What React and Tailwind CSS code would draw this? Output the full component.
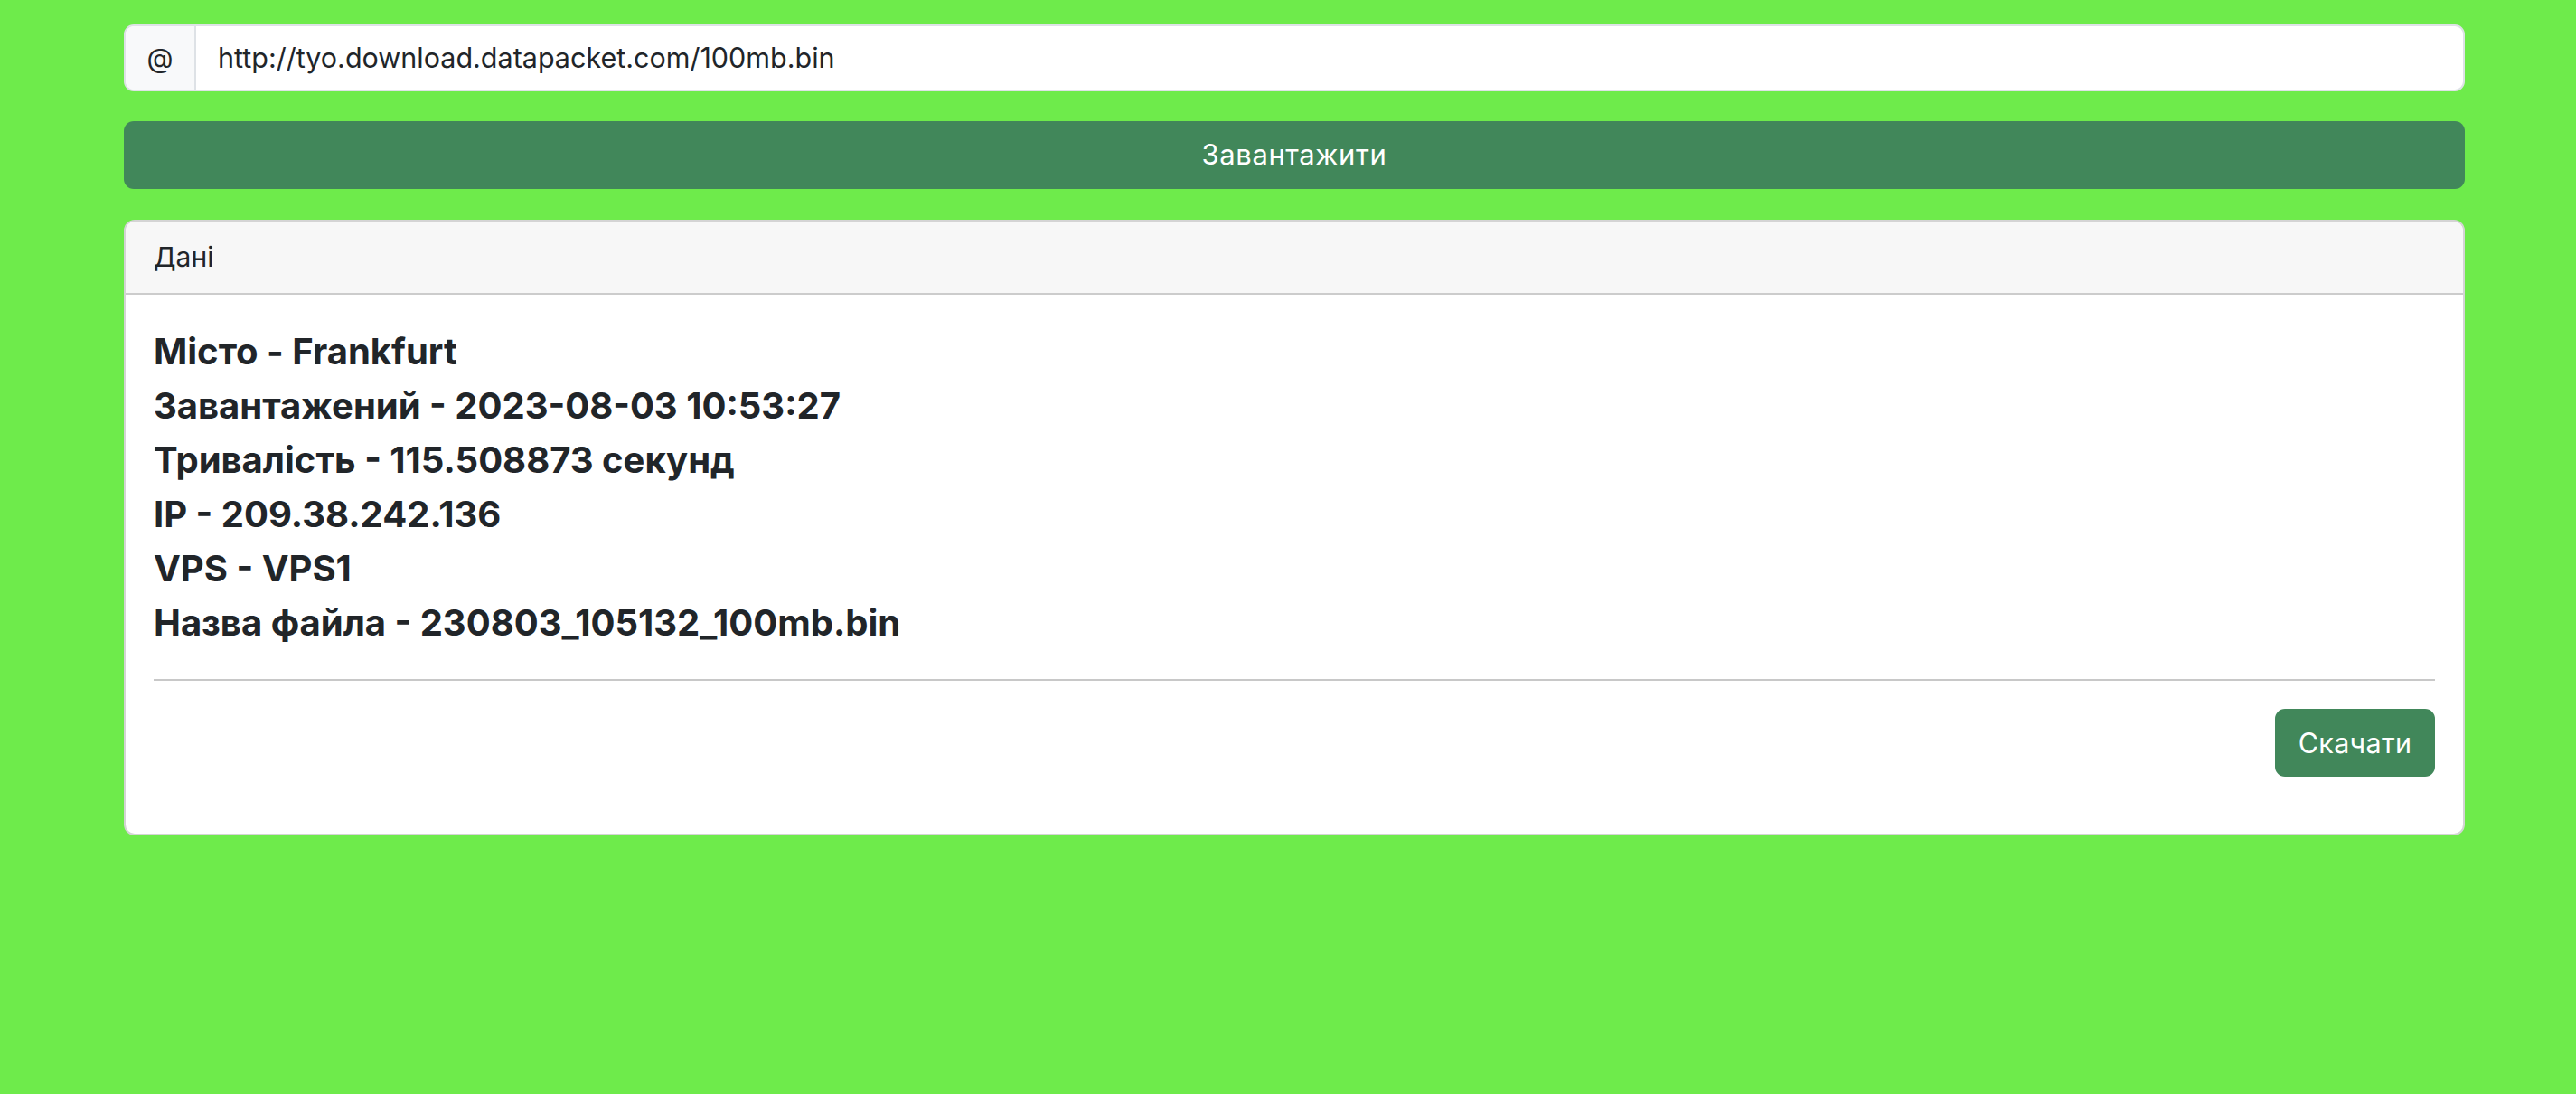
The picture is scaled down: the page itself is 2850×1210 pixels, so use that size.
import React from "react";

const rows = [
  "Місто - Frankfurt",
  "Завантажений - 2023-08-03 10:53:27",
  "Тривалість - 115.508873 секунд",
  "IP - 209.38.242.136",
  "VPS - VPS1",
  "Назва файла - 230803_105132_100mb.bin",
];

export default function App() {
  return (
    <div
      className="min-h-[1210px] bg-[#6eeb4b] pl-[137px] pt-[27px] text-[#212529]"
      style={{ fontFamily: "Inter, 'Noto Sans', sans-serif" }}
    >
      <div className="w-[2590px] flex flex-col">
        {/* URL field */}
        <div className="flex h-[74px] rounded-[11px] border-2 border-[#dee2e6] bg-white overflow-hidden">
          <span className="w-[78px] flex items-center justify-center bg-[#f8f9fa] border-r-2 border-[#dee2e6] text-[30px]">
            @
          </span>
          <span className="flex items-center pl-[24px] text-[30.5px]">
            http://tyo.download.datapacket.com/100mb.bin
          </span>
        </div>

        {/* Submit */}
        <button className="mt-[33px] h-[75px] rounded-[11px] bg-[#41875a] text-white text-[31px] tracking-[0.6px]">
          Завантажити
        </button>

        {/* Result card */}
        <div className="mt-[34px] rounded-[12px] border-2 border-[#d4d4d4] bg-white overflow-hidden">
          <div className="h-[81px] flex items-center px-[31px] bg-[#f7f7f7] border-b-2 border-[#cccccc] text-[30px]">
            Дані
          </div>
          <div className="px-[31px] pt-[33px] pb-[63px]">
            {rows.map((r) => (
              <div key={r} className="text-[40px] font-bold leading-[60px]">
                {r}
              </div>
            ))}
            <hr className="mt-[32px] border-t-2 border-[#c8c8c8]" />
            <div className="mt-[31px] flex justify-end">
              <button className="h-[75px] w-[177px] rounded-[11px] bg-[#41875a] text-white text-[30.5px] tracking-[0.3px]">
                Скачати
              </button>
            </div>
          </div>
        </div>
      </div>
    </div>
  );
}
